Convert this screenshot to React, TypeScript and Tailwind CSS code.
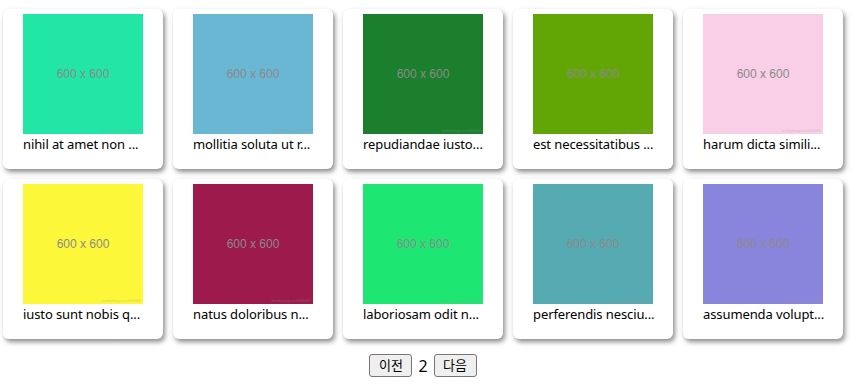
import React from "react";

const items = [
  { c: "#21e6a5", t: "nihil at amet non ..." },
  { c: "#6ab7d3", t: "mollitia soluta ut r..." },
  { c: "#1b7f2e", t: "repudiandae iusto..." },
  { c: "#62a606", t: "est necessitatibus ..." },
  { c: "#f8cfe6", t: "harum dicta simili..." },
  { c: "#fdf73a", t: "iusto sunt nobis q..." },
  { c: "#9c1a4c", t: "natus doloribus n..." },
  { c: "#1ee672", t: "laboriosam odit n..." },
  { c: "#56abb3", t: "perferendis nesciu..." },
  { c: "#8a85dc", t: "assumenda volupt..." },
];

export default function App() {
  return (
    <div
      className="w-[861px] h-[389px] bg-white overflow-hidden"
      style={{ fontFamily: '"Noto Sans", "Noto Sans CJK KR", sans-serif' }}
    >
      <div className="w-[846px] pl-[3px] pt-[9px] grid grid-cols-[repeat(5,160px)] gap-[10px]">
        {items.map((it, i) => (
          <div
            key={i}
            className="h-[160px] bg-white rounded-[6px] shadow-[2px_3px_5px_rgba(0,0,0,0.45)] flex flex-col items-center pt-[5px]"
          >
            <div
              className="w-[120px] h-[120px] relative flex items-center justify-center"
              style={{ backgroundColor: it.c }}
            >
              <span
                className="text-[12px] text-[#8a8a8a] leading-none"
                style={{ fontFamily: '"Liberation Sans", Arial, sans-serif' }}
              >
                600 x 600
              </span>
              <span className="absolute right-[2px] bottom-[1px] text-[3px] leading-none text-[#9a9a9a] opacity-40">
                dummyimage.com/600x600
              </span>
            </div>
            <div className="w-[120px] mt-[1px] text-[13px] leading-[18px] text-black whitespace-nowrap tracking-[-0.1px]">
              {it.t}
            </div>
          </div>
        ))}
      </div>
      <div className="w-[846px] flex justify-center items-center mt-[15px] text-black">
        <button className="h-[23px] w-[43px] border border-[#767676] rounded-[3px] bg-[#efefef] text-[13px] leading-none">
          이전
        </button>
        <span className="mx-[6px] text-[16px] leading-none">2</span>
        <button className="h-[23px] w-[43px] border border-[#767676] rounded-[3px] bg-[#efefef] text-[13px] leading-none">
          다음
        </button>
      </div>
    </div>
  );
}
